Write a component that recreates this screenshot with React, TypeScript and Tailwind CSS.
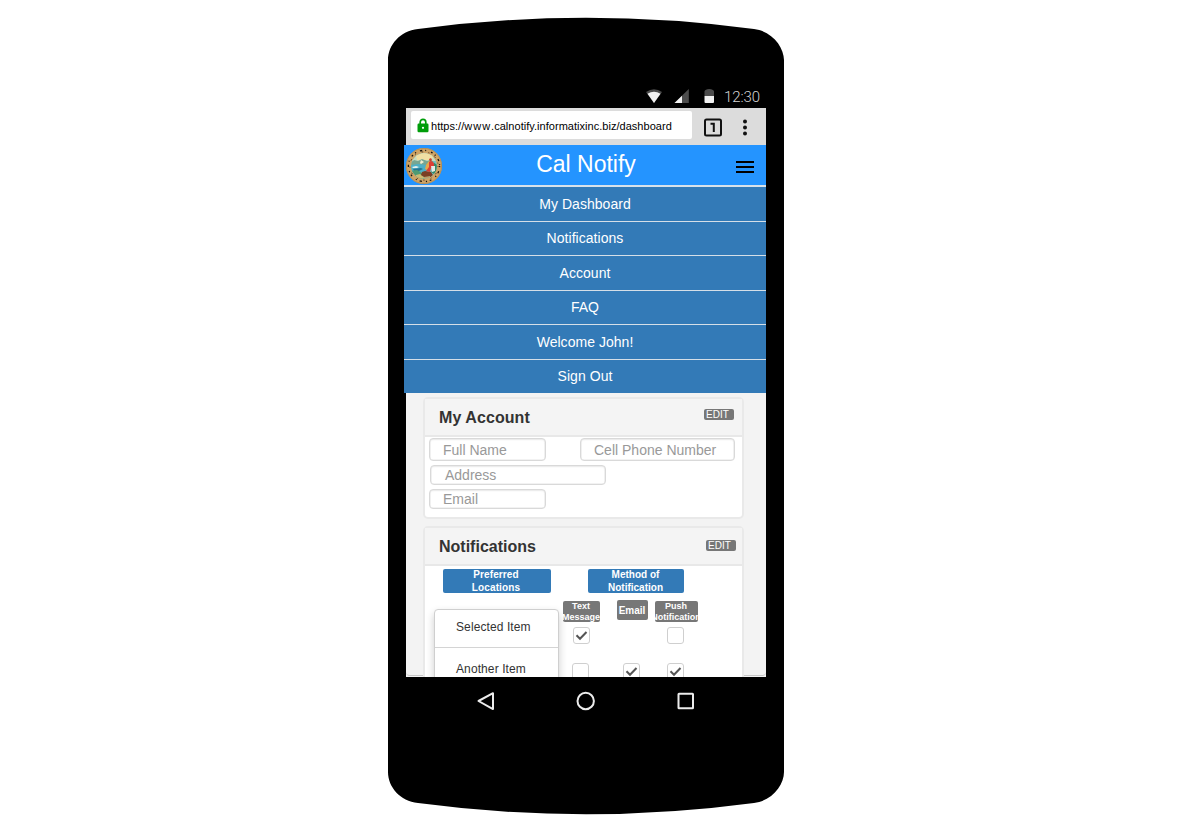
import React from "react";

const links = [
  { label: "My Dashboard", size: "h-[34px]" },
  { label: "Notifications", size: "h-[33px] pb-[2px]" },
  { label: "Account", size: "h-[34px]" },
  { label: "FAQ", size: "h-[33px] pb-[2px]" },
  { label: "Welcome John!", size: "h-[34px]" },
  { label: "Sign Out", size: "h-[33px] pb-[2px]" },
];

function StatusBar() {
  return (
    <div className="mt-[67px] flex h-[24px] w-full items-center justify-end pr-[24px]">
      <svg className="h-[24px] w-[72px]" viewBox="0 0 72 24">
        <path d="M2 8Q10 2.500 18 8L10 19Z" fill="#4c4c4c" />
        <path d="M3.500 9.800Q10 5.800 16.500 9.800L10 19Z" fill="#f2f2f2" />
        <path d="M30.500 19L44.800 5V19Z" fill="#4c4c4c" />
        <path d="M30.500 19L38 11.800V19Z" fill="#f2f2f2" />
        <path d="M60.500 12V7.500Q60.500 6.500 61.500 6Q65.200 4 69 6Q70 6.500 70 7.500V12Z" fill="#4c4c4c" />
        <path d="M60.500 12H70V18Q70 19 69 19H61.500Q60.500 19 60.500 18Z" fill="#f2f2f2" />
      </svg>
      <span className="ml-[8px] w-[36px] whitespace-nowrap pt-[2px] font-['Roboto',sans-serif] text-[15px] font-light leading-[20px] tracking-[-0.100px] text-[#d5d5d5]">
        12:30
      </span>
    </div>
  );
}

function BrowserBar() {
  return (
    <div className="ml-[2px] flex h-[37px] w-[360px] items-start bg-[#dcdcdc] pl-[5px] pt-[3px]">
      <div className="flex h-[28px] w-[281px] items-center rounded-[2px] bg-white pl-[6px]">
        <svg className="h-[15px] w-[12px]" viewBox="0 0 12 15">
          <path d="M3.200 6.500V4.200a2.800 2.800 0 0 1 5.600 0V6.500" fill="none" stroke="#009d0a" strokeWidth="1.700" />
          <rect x="0.500" y="5.500" width="11" height="8.800" rx="1.200" fill="#009d0a" />
          <circle cx="6" cy="9.800" r="1.100" fill="#fff" />
        </svg>
        <span className="ml-[2px] whitespace-nowrap pt-[2px] text-[11px] leading-[14px] tracking-[0.030px] text-black">
          https://<span className="tracking-[1px]">www</span>.calnotify.informatixinc.biz/dashboard
        </span>
      </div>
      <svg className="ml-[11px] mt-[6px] h-[20px] w-[20px]" viewBox="0 0 20 20">
        <rect x="2" y="2.500" width="16" height="16" rx="1.500" fill="none" stroke="#111" strokeWidth="2" />
        <path d="M7.500 6.700H10.800V15" fill="none" stroke="#111" strokeWidth="2" />
      </svg>
      <svg className="ml-[12px] mt-[6px] h-[20px] w-[20px]" viewBox="0 0 20 20" fill="#111">
        <circle cx="10" cy="4.500" r="2" />
        <circle cx="10" cy="10.500" r="2" />
        <circle cx="10" cy="16.500" r="2" />
      </svg>
    </div>
  );
}

function Seal() {
  return (
    <svg className="h-[38px] w-[38px]" viewBox="0 0 38 38">
      <defs>
        <clipPath id="seal-scene">
          <circle cx="19" cy="19" r="12.800" />
        </clipPath>
      </defs>
      <circle cx="19" cy="19" r="18" fill="#cfa466" />
      <circle cx="19" cy="19" r="17.600" fill="none" stroke="#b0874c" strokeWidth="0.700" />
      <circle cx="19" cy="19" r="15.600" fill="none" stroke="#17130d" strokeWidth="1.300" strokeDasharray="1.200 4.100 2.300 3.100 1 5 1.800 2.700" />
      <circle cx="19" cy="19" r="14.100" fill="none" stroke="#2b2116" strokeWidth="0.800" strokeDasharray="1 6.200 1.600 5.300" />
      <g clipPath="url(#seal-scene)">
        <path d="M5 5h28v28H5z" fill="#74bfc4" />
        <path d="M5 5h28v9H5z" fill="#c8dcc0" />
        <path d="M11 9l6-3h8l4 4-4 3H12z" fill="#f0dfa3" />
        <path d="M5 17l4-4 4 1 4-2 5 2 4-1 4 3v2H5z" fill="#77a692" />
        <path d="M5 18l8-1 9 1v7H5z" fill="#4eafc6" />
        <path d="M7 20l4-1 3 1-2 1H8z" fill="#e4f1ed" />
        <path d="M8 22l8-1 2 1-4 2H9z" fill="#277491" />
        <path d="M5 24l7-1 5 3 2 7H8z" fill="#4f9b72" />
        <path d="M11 28l4-1 4 3-2 4h-6z" fill="#cdbb72" />
        <path d="M17 25l3-1 6 1 2 3-2 2h-7l-3-2z" fill="#7b3f24" />
        <path d="M19 30l6-1 1 4h-7z" fill="#b7a06b" />
        <path d="M21 18l3-4 3 2-1 3-4 4-2-1z" fill="#e8a84a" />
        <path d="M24 15l3-1 3 4-1 2-3 1-1 4-4-1 3-4z" fill="#dc3e35" />
        <path d="M29 16l4 2v6l-4 3-3-2 3-3z" fill="#348b68" />
        <path d="M26 19h4v5l-3 1z" fill="#e7ebe5" />
        <path d="M24 12l2-1 1 2-2 2z" fill="#c83c2b" />
        <path d="M15 16l1-3 3 2-3 2z" fill="#f0edcf" />
      </g>
    </svg>
  );
}

function EditBadge() {
  return (
    <span className="h-[11px] w-[30px] rounded-[2px] bg-[#777] pl-[2px] text-[10px] leading-[12px] text-white">
      EDIT
    </span>
  );
}

function Field({ label, className }: { label: string; className: string }) {
  return (
    <div className={`flex items-center rounded-[4px] border border-[#d9d9d9] bg-white text-[14px] leading-[16px] text-[#999] shadow-[inset_0_0_0_0.500px_#e5e5e5,inset_0_1px_2px_rgba(0,0,0,0.07)] ${className}`}>
      <span className="whitespace-nowrap">{label}</span>
    </div>
  );
}

function Check({ checked }: { checked?: boolean }) {
  return (
    <svg className="h-[17px] w-[17px]" viewBox="0 0 17 17">
      <rect x="0.500" y="0.500" width="16" height="16" rx="2.500" fill="#fff" stroke="#cfcfcf" />
      {checked && <path d="M3.500 8.200L7 11.800L13.500 5" fill="none" stroke="#555" strokeWidth="2" />}
    </svg>
  );
}

function Account() {
  return (
    <section className="ml-[17px] mt-[4px] h-[122px] w-[321px] rounded-[5px] border-2 border-[#e9e9e9] bg-white">
      <header className="flex h-[38px] items-start justify-between border-b-2 border-[#e8e8e8] bg-[#f4f4f4] pl-[14px] pr-[8px]">
        <h2 className="pt-[9px] text-[16px] font-bold leading-[20px] tracking-[0.080px] text-[#333]">My Account</h2>
        <div className="flex pt-[10px]"><EditBadge /></div>
      </header>
      <div className="flex pl-[4px] pt-px">
        <Field label="Full Name" className="h-[23px] w-[117px] pl-[13px]" />
        <Field label="Cell Phone Number" className="ml-[34px] h-[23px] w-[155px] pl-[13px]" />
      </div>
      <Field label="Address" className="ml-[5px] mt-[4px] h-[20px] w-[176px] pl-[14px]" />
      <Field label="Email" className="ml-[4px] mt-[4px] h-[20px] w-[117px] pl-[13px]" />
    </section>
  );
}

function Notifications() {
  return (
    <section className="ml-[17px] mt-[7px] h-[200px] w-[321px] shrink-0 rounded-[5px] border-2 border-[#e9e9e9] bg-white">
      <header className="flex h-[38px] items-start justify-between border-b-2 border-[#e8e8e8] bg-[#f4f4f4] pl-[14px] pr-[6px]">
        <h2 className="pt-[9px] text-[16px] font-bold leading-[20px] text-[#333]">Notifications</h2>
        <div className="flex pt-[12px]"><EditBadge /></div>
      </header>
      <div className="flex pl-[9px] pt-px">
        <div className="w-[125px] pt-[2px]">
          <div className="ml-[9px] h-[24px] w-[108px] rounded-[2px] bg-[#337ab7] pr-[2px] text-center text-[10px] font-bold leading-[13px] tracking-[0.120px] text-white">
            <div className="relative -top-px">Preferred<br />Locations</div>
          </div>
          <ul className="mt-[16px] h-[120px] rounded-[4px] border border-[#cfcfcf] bg-white text-[12px] leading-[16px] tracking-[0.100px] text-[#333] shadow-[0_4px_9px_rgba(0,0,0,0.2)]">
            <li className="h-[38px] border-b border-[#d4d4d4] pl-[21px] pt-[9px]">Selected Item</li>
            <li className="pl-[21px] pt-[13px]">Another Item</li>
          </ul>
        </div>
        <div className="ml-[4px] w-[140px] pt-[2px]">
          <div className="ml-[25px] h-[24px] w-[96px] rounded-[2px] bg-[#337ab7] pr-px text-center text-[10px] font-bold leading-[13px] text-white">
            <div className="relative -top-px">Method of<br />Notification</div>
          </div>
          <div className="mt-[7px] flex items-start text-center text-[9px] font-bold leading-[11px] text-white">
            <div className="mt-px flex h-[21px] w-[37px] items-center justify-center overflow-hidden rounded-[2px] bg-[#777]"><span className="w-[60px] shrink-0 pr-px">Text<br />Message</span></div>
            <div className="ml-[17px] flex h-[20px] w-[31px] items-center justify-center rounded-[2px] bg-[#777] pr-px text-[10px]">Email</div>
            <div className="ml-[7px] mt-px flex h-[21px] w-[43px] items-center justify-center overflow-hidden rounded-[2px] bg-[#777]"><span className="w-[60px] shrink-0 pr-px">Push<br />Notification</span></div>
          </div>
          <div className="mt-[5px] flex pl-[10px]">
            <Check checked />
            <div className="ml-[77px]"><Check /></div>
          </div>
          <div className="mt-[19px] flex pl-[9px]">
            <Check />
            <div className="ml-[34px]"><Check checked /></div>
            <div className="ml-[27px]"><Check checked /></div>
          </div>
        </div>
      </div>
    </section>
  );
}

export default function App() {
  return (
    <main className="h-[835px] w-[1187px] overflow-hidden bg-white pl-[388px] pt-[17px] font-['Liberation_Sans',Arial,sans-serif]">
      <div className="relative h-[798px] w-[396px]">
        <svg className="absolute inset-0 h-[798px] w-[396px]" viewBox="0 0 396 798">
          <path d="M0 43C0 28 12 14 30 12Q198 -10.500 366 12C384 14 396 30 396 43V755C396 768 384 784 366 786Q198 808.500 30 786C12 784 0 770 0 755Z" fill="#000" />
        </svg>
        <div className="relative flex flex-col">
          <StatusBar />
          <div className="ml-[16px] h-[569px] w-[362px] overflow-hidden">
            <BrowserBar />
            <div className="flex h-[42px] items-start border-b-2 border-[#d9e2ea] bg-[#2494ff] pl-px pt-[2px]">
              <Seal />
              <h1 className="w-[286px] pt-[2px] text-center text-[23px] font-normal leading-[30px] text-white">Cal Notify</h1>
              <svg className="ml-[7px] mt-[12px] h-[15px] w-[18px]" viewBox="0 0 18 15">
                <path d="M0 3H18M0 8H18M0 13H18" stroke="#000" strokeWidth="2" />
              </svg>
            </div>
            <nav className="flex h-[206px] flex-col gap-px bg-[#d5dfe8]">
              {links.map((link) => (
                <a key={link.label} className={`flex items-center justify-center bg-[#337ab7] text-[14px] leading-[16px] tracking-[0.040px] text-white ${link.size}`}>
                  {link.label}
                </a>
              ))}
            </nav>
            <div className="relative ml-[2px] flex h-[284px] w-[360px] flex-col overflow-hidden bg-[#f3f3f3]">
              <div className="absolute bottom-px left-0 h-[20px] w-[360px] rounded-b-[4px] border-b border-[#c8c8c8]" />
              <div className="relative">
                <Account />
                <Notifications />
              </div>
            </div>
          </div>
          <div className="flex h-[48px] items-center pl-[86px]">
            <svg className="h-[24px] w-[224px]" viewBox="0 0 224 24" fill="none" stroke="#ececec" strokeWidth="2" strokeLinejoin="round">
              <path d="M4.500 12L19 4.200V20.100Z" />
              <circle cx="111.700" cy="12" r="8.200" />
              <rect x="204.500" y="4.700" width="14.500" height="14.500" rx="0.500" />
            </svg>
          </div>
        </div>
      </div>
    </main>
  );
}
